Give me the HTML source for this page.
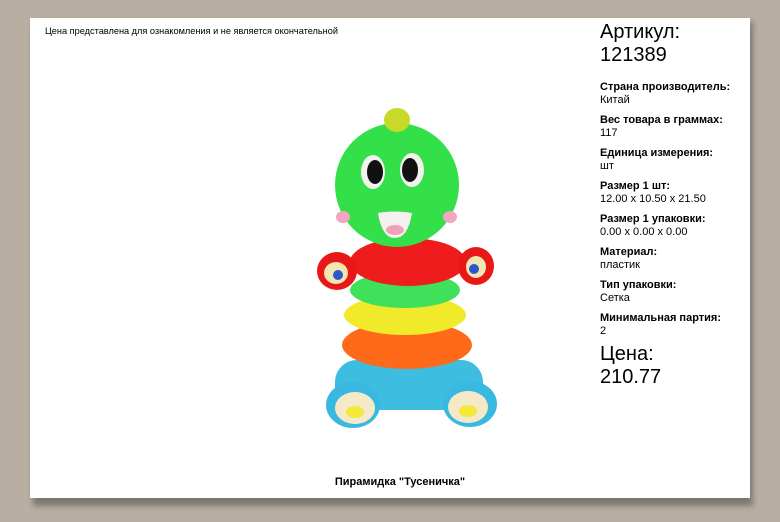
<!DOCTYPE html>
<html><head><meta charset="utf-8"><style>
body{margin:0;width:780px;height:522px;background:#b9aea2;position:relative;overflow:hidden;font-family:"Liberation Sans",Arial,sans-serif;color:#000}
.shadow{position:absolute;left:33px;top:22px;width:720px;height:484px;background:#7d7670;filter:blur(3px)}
.card{position:absolute;left:30px;top:18px;width:720px;height:480px;background:#fff}
.note{position:absolute;left:45px;top:26px;font-size:9.2px}
.col{position:absolute;left:600px;top:21px;font-size:11px;line-height:12.5px}
.big{font-size:20px;line-height:23px}
.l{font-weight:bold;margin-top:8px}
.title{position:absolute;left:0;width:800px;text-align:center;top:476px;font-size:11px;font-weight:bold}
</style></head><body>
<div class="shadow"></div><div class="card"></div>
<div class="note">Цена представлена для ознакомления и не является окончательной</div>
<div class="col">
<div class="big">Артикул:<br>121389</div>
<div class="l" style="margin-top:14px">Страна производитель:</div><div>Китай</div>
<div class="l">Вес товара в граммах:</div><div>117</div>
<div class="l">Единица измерения:</div><div>шт</div>
<div class="l">Размер 1 шт:</div><div>12.00 x 10.50 x 21.50</div>
<div class="l">Размер 1 упаковки:</div><div>0.00 x 0.00 x 0.00</div>
<div class="l">Материал:</div><div>пластик</div>
<div class="l">Тип упаковки:</div><div>Сетка</div>
<div class="l">Минимальная партия:</div><div>2</div>
<div class="big" style="margin-top:6px">Цена:<br>210.77</div>
</div>
<div class="title">Пирамидка "Тусеничка"</div>
<svg width="780" height="522" style="position:absolute;left:0;top:0">
<rect x="335" y="360" width="148" height="50" rx="22" fill="#3dbde0"/>
<ellipse cx="353" cy="405" rx="27" ry="23" fill="#39b9e0"/>
<ellipse cx="355" cy="408" rx="20" ry="16" fill="#f5eac8"/>
<ellipse cx="355" cy="412" rx="9" ry="6" fill="#f4e83a"/>
<ellipse cx="470" cy="404" rx="27" ry="23" fill="#39b9e0"/>
<ellipse cx="468" cy="407" rx="20" ry="16" fill="#f5eac8"/>
<ellipse cx="468" cy="411" rx="9" ry="6" fill="#f4e83a"/>
<ellipse cx="407" cy="345" rx="65" ry="24" fill="#ff6a1a"/>
<ellipse cx="405" cy="315" rx="61" ry="20" fill="#f0ea2a"/>
<ellipse cx="405" cy="290" rx="55" ry="18" fill="#3fe05a"/>
<ellipse cx="408" cy="262" rx="58" ry="24" fill="#ee1c1c"/>
<ellipse cx="337" cy="271" rx="20" ry="19" fill="#e81818"/>
<ellipse cx="336" cy="273" rx="12" ry="11" fill="#f3e6b0"/>
<circle cx="338" cy="275" r="5" fill="#2a58d0"/>
<ellipse cx="476" cy="266" rx="18" ry="19" fill="#e81818"/>
<ellipse cx="476" cy="267" rx="10" ry="11" fill="#f3e6b0"/>
<circle cx="474" cy="269" r="5" fill="#2a58d0"/>
<ellipse cx="397" cy="185" rx="62" ry="62" fill="#33e04a"/>
<ellipse cx="397" cy="120" rx="13" ry="12" fill="#c9d92a"/>
<ellipse cx="373" cy="172" rx="12" ry="17" fill="#f2f2ee"/>
<ellipse cx="375" cy="172" rx="8" ry="12" fill="#111"/>
<ellipse cx="412" cy="170" rx="12" ry="17" fill="#f2f2ee"/>
<ellipse cx="410" cy="170" rx="8" ry="12" fill="#111"/>
<path d="M378 213 Q395 210 412 213 Q408 238 395 238 Q382 238 378 213Z" fill="#f6f0f0"/>
<ellipse cx="395" cy="230" rx="9" ry="5" fill="#f0a0b8"/>
<ellipse cx="343" cy="217" rx="7" ry="6" fill="#f3a6c0"/>
<ellipse cx="450" cy="217" rx="7" ry="6" fill="#f3a6c0"/>
</svg>
</body></html>
